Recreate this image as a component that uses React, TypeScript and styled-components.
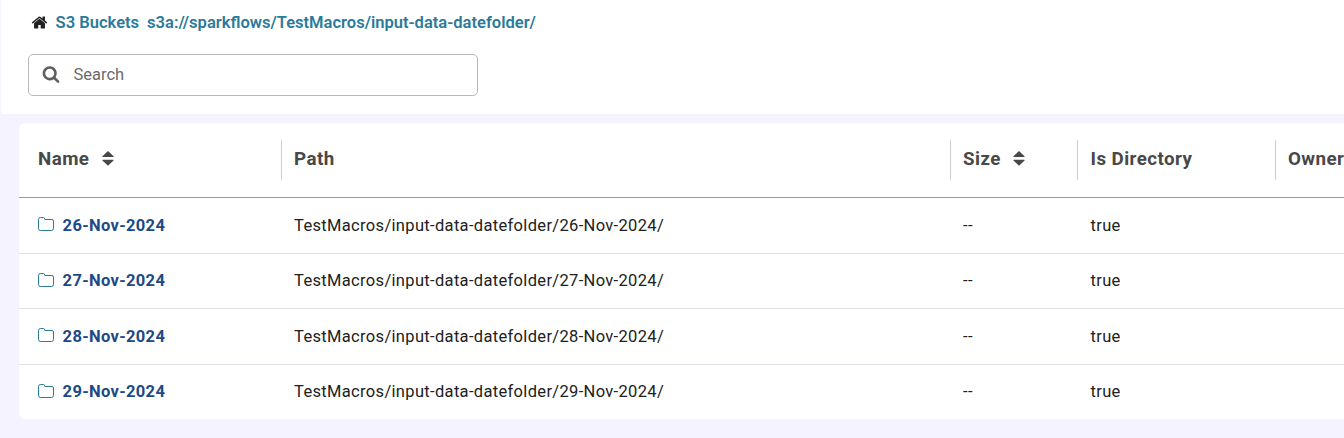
import React from "react";
import styled, { createGlobalStyle } from "styled-components";

const GlobalStyle = createGlobalStyle`
  * { box-sizing: border-box; }
  html, body { margin: 0; padding: 0; }
  body {
    background: #f5f3ff;
    font-family: Roboto, sans-serif;
    overflow: hidden;
  }
`;

const Page = styled.main`
  height: 438px;
  overflow: hidden;
`;

const TopBar = styled.header`
  height: 114px;
  margin-left: 1px;
  padding: 12px 0 0 27px;
  background: #fff;
`;

const Breadcrumb = styled.nav`
  display: flex;
  align-items: center;
  height: 20px;
  padding-left: 3px;
  white-space: nowrap;
`;

const Crumb = styled.a<{ $gap: number }>`
  margin-left: ${(p) => p.$gap}px;
  padding-top: 2px;
  color: #2b7a9b;
  font-size: 16.55px;
  font-weight: 600;
  line-height: 20px;
`;

const SearchBox = styled.label`
  display: flex;
  align-items: center;
  width: 450px;
  height: 42px;
  margin-top: 22px;
  padding: 0 0 1px 13px;
  border: 1px solid #b9b9b9;
  border-radius: 5px;
`;

const Magnifier = styled.svg`
  margin: 0 0 2px -0.5px;
`;

const SearchInput = styled.input`
  flex: 1;
  margin-left: 14px;
  padding: 0;
  border: 0;
  outline: 0;
  background: transparent;
  font: 400 16.5px/20px Roboto, sans-serif;
  &::placeholder { color: #6c6c6c; opacity: 1; }
`;

const Card = styled.section`
  width: 1400px;
  margin: 9px 0 0 19px;
  border-radius: 6px;
  background: #fff;
  overflow: hidden;
`;

const columns = "262px 669px 127px 198px 144px";

const HeaderRow = styled.div`
  display: grid;
  grid-template-columns: ${columns};
  height: 75px;
  padding-top: 17px;
  border-bottom: 1px solid #9a9a9a;
`;

const HeaderCell = styled.div<{ $indent: number; $last?: boolean }>`
  display: flex;
  align-items: center;
  gap: 12.4px;
  height: 40px;
  padding: 0 0 3px ${(p) => p.$indent}px;
  margin-right: ${(p) => (p.$last ? 0 : -1)}px;
  border-right: ${(p) => (p.$last ? "0" : "1px solid #ccc")};
  color: #484848;
  font-size: 18.75px;
  font-weight: 700;
  letter-spacing: 0.44px;
  white-space: nowrap;
`;

const Row = styled.div<{ $height: number }>`
  display: grid;
  grid-template-columns: ${columns};
  align-items: center;
  height: ${(p) => p.$height}px;
  border-bottom: 1px solid #dee2e6;
  &:last-child { border-bottom: 0; }
`;

const Cell = styled.div<{ $indent: number }>`
  display: flex;
  align-items: center;
  padding-left: ${(p) => p.$indent}px;
  color: #212121;
  font-size: 16.5px;
  line-height: 20px;
  letter-spacing: 0.33px;
`;

const FolderLink = styled.a`
  margin-left: 8.6px;
  color: #1d4a86;
  font-weight: 700;
`;

const FolderShape = styled.svg`
  margin-bottom: 3px;
`;

const HomeIcon = () => (
  <svg width="17" height="17" viewBox="0 0 1792 1792" fill="#212121">
    <path d="M1472 992v480q0 26-19 45t-45 19h-384v-384h-256v384h-384q-26 0-45-19t-19-45v-480q0-1 .5-3t.5-3l575-474 575 474q1 2 1 6zm223-69l-62 74q-8 9-21 11h-3q-13 0-21-7l-692-577-692 577q-12 8-24 7-13-2-21-11l-62-74q-8-10-7-23.5t11-21.5l719-599q32-26 76-26t76 26l244 204v-195q0-14 9-23t23-9h192q14 0 23 9t9 23v408l219 182q10 8 11 21.5t-7 23.5z" />
  </svg>
);

const SearchIcon = () => (
  <Magnifier width="18" height="18" viewBox="0 0 1792 1792" fill="#5f5f5f">
    <path d="M1216 832q0-185-131.5-316.5t-316.5-131.5-316.5 131.5-131.5 316.5 131.5 316.5 316.5 131.5 316.5-131.5 131.5-316.5zm512 832q0 52-38 90t-90 38q-54 0-90-38l-343-342q-179 124-399 124-143 0-273.5-55.5t-225-150-150-225-55.5-273.5 55.5-273.5 150-225 225-150 273.5-55.5 273.5 55.5 225 150 150 225 55.5 273.5q0 220-124 399l343 343q37 37 37 90z" />
  </Magnifier>
);

const FolderIcon = () => (
  <FolderShape width="16" height="14" viewBox="0 0 16 14" fill="none" stroke="#2b7a9b">
    <path d="M.5 2.5a2 2 0 0 1 2-2h2.7a1.6 1.6 0 0 1 1.6 1.6v.4H14a1.5 1.5 0 0 1 1.5 1.5v7.5a2 2 0 0 1-2 2h-11a2 2 0 0 1-2-2z" />
  </FolderShape>
);

const SortIcon = () => (
  <svg width="12" height="15" viewBox="0 0 12 15" fill="#484848">
    <path d="M6 0l5.6 5.2q.4.8-.6.8H1q-1 0-.6-.8zM6 14.8l5.6-5.2q.4-.8-.6-.8H1q-1 0-.6.8z" />
  </svg>
);

const headers = [
  { label: "Name", sortable: true, indent: 19 },
  { label: "Path", indent: 13 },
  { label: "Size", sortable: true, indent: 13 },
  { label: "Is Directory", indent: 13.5 },
  { label: "Owner", indent: 13 },
];

const folders = [
  { name: "26-Nov-2024", height: 56 },
  { name: "27-Nov-2024", height: 55 },
  { name: "28-Nov-2024", height: 56 },
  { name: "29-Nov-2024", height: 54 },
];

export default function App() {
  return (
    <Page>
      <GlobalStyle />
      <TopBar>
        <Breadcrumb>
          <HomeIcon />
          <Crumb $gap={7.6}>S3 Buckets</Crumb>
          <Crumb $gap={8}>s3a://sparkflows/TestMacros/input-data-datefolder/</Crumb>
        </Breadcrumb>
        <SearchBox>
          <SearchIcon />
          <SearchInput placeholder="Search" />
        </SearchBox>
      </TopBar>
      <Card>
        <HeaderRow>
          {headers.map((h, i) => (
            <HeaderCell key={h.label} $indent={h.indent} $last={i === headers.length - 1}>
              {h.label}
              {h.sortable && <SortIcon />}
            </HeaderCell>
          ))}
        </HeaderRow>
        {folders.map((f) => (
          <Row key={f.name} $height={f.height}>
            <Cell $indent={19}>
              <FolderIcon />
              <FolderLink>{f.name}</FolderLink>
            </Cell>
            <Cell $indent={13}>{`TestMacros/input-data-datefolder/${f.name}/`}</Cell>
            <Cell $indent={13}>--</Cell>
            <Cell $indent={13.5}>true</Cell>
            <Cell $indent={13} />
          </Row>
        ))}
      </Card>
    </Page>
  );
}
